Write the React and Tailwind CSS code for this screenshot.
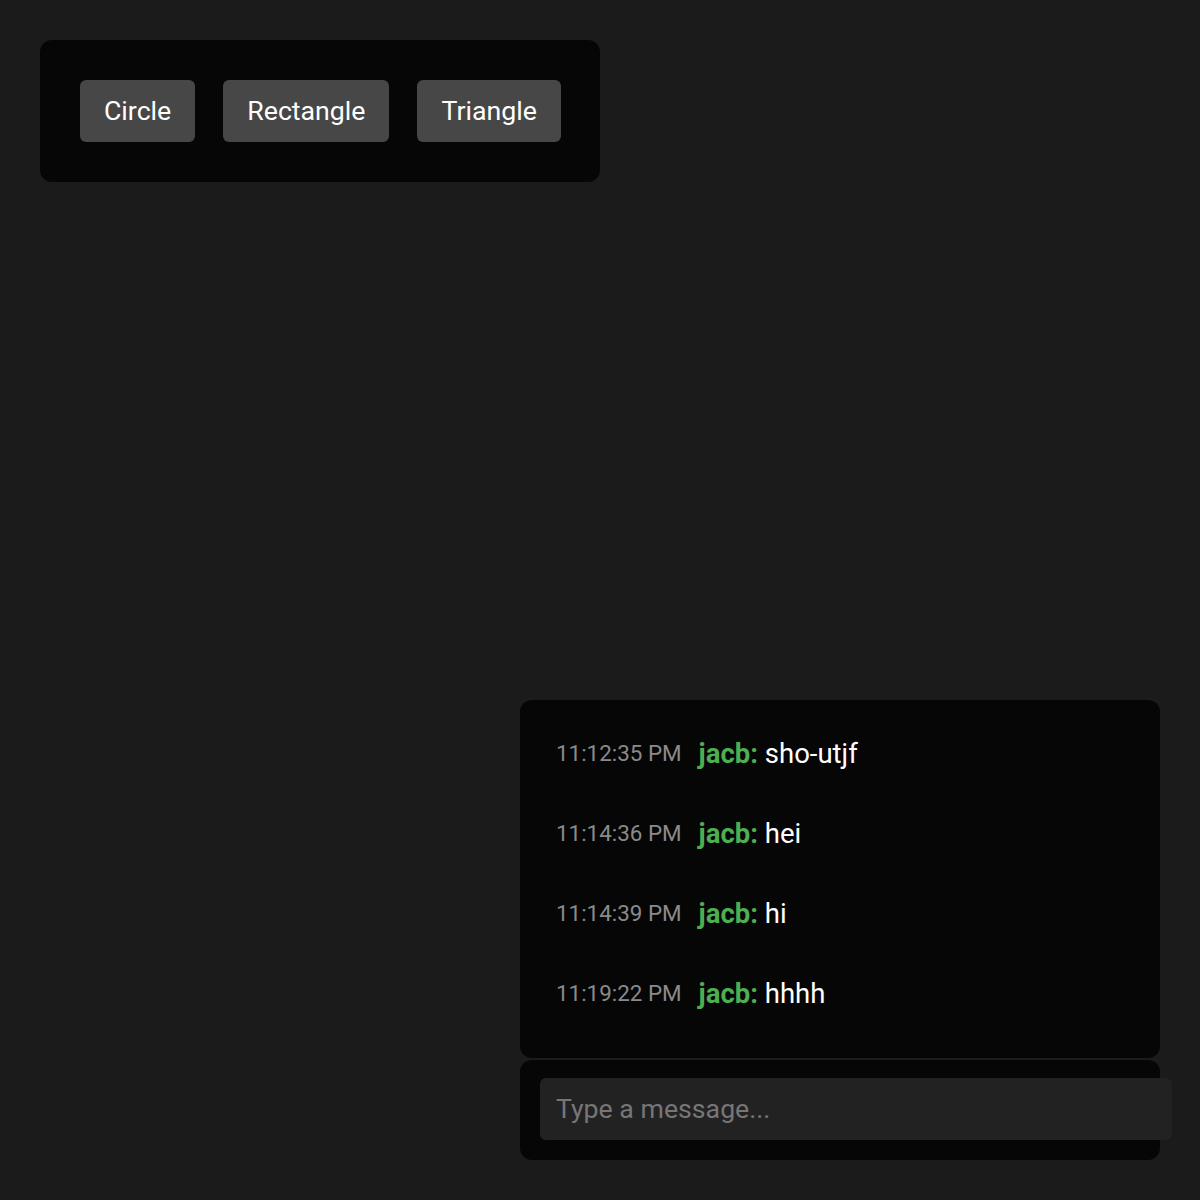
import React from 'react';

const messages = [
    { time: '11:12:35 PM', user: 'jacb', text: 'sho-utjf' },
    { time: '11:14:36 PM', user: 'jacb', text: 'hei' },
    { time: '11:14:39 PM', user: 'jacb', text: 'hi' },
    { time: '11:19:22 PM', user: 'jacb', text: 'hhhh' },
];

const shapes = ['Circle', 'Rectangle', 'Triangle'];

const App = () => {
    const [draft, setDraft] = React.useState('');

    return (
        <div className="min-h-[1200px] bg-[#1b1b1b] font-['Roboto',sans-serif] relative">
            <div className="p-10">
                <div className="w-[560px] h-[142px] bg-[#060606] rounded-xl flex items-center gap-7 px-10">
                    {shapes.map((shape) => (
                        <button
                            key={shape}
                            className="h-[62px] px-6 bg-[#474747] rounded-md text-white text-[26.7px]"
                        >
                            {shape}
                        </button>
                    ))}
                </div>
            </div>

            <div className="absolute left-[520px] top-[700px] w-[640px] flex flex-col gap-0.5">
                <div className="h-[358px] bg-[#060606] rounded-xl pl-9 pt-[34px] flex flex-col gap-10">
                    {messages.map((m, i) => (
                        <div key={i} className="flex items-center h-10">
                            <span className="text-[#8a8a8a] text-[22.4px] mr-[17px]">{m.time}</span>
                            <span className="text-[27.5px]">
                                <span className="text-[#4caf50] font-bold">{m.user}:</span>{' '}
                                <span className="text-white">{m.text}</span>
                            </span>
                        </div>
                    ))}
                </div>
                <div className="h-[100px] bg-[#060606] rounded-xl px-5 pt-[18px]">
                    <input
                        className="w-[632px] h-[62px] px-4 bg-[#222222] rounded-md text-[26.7px] text-white placeholder:text-[#767676] outline-none"
                        placeholder="Type a message..."
                        value={draft}
                        onChange={(e) => setDraft(e.target.value)}
                    />
                </div>
            </div>
        </div>
    );
};

export default App;
